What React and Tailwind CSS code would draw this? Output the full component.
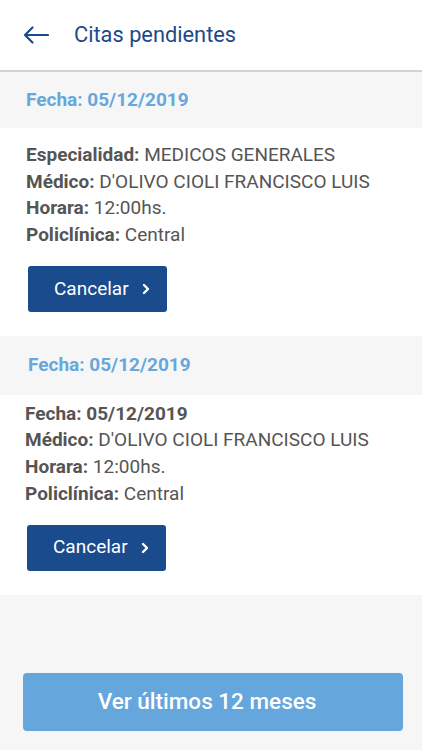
import React from "react";

function Chevron() {
  return (
    <svg width="10" height="12" viewBox="0 0 10 12" className="ml-[12px]">
      <path d="M3 2 L7 6 L3 10" fill="none" stroke="white" strokeWidth="2.4" strokeLinecap="round" strokeLinejoin="round" />
    </svg>
  );
}

function Row({ label, value }) {
  return (
    <div className="h-[26.7px] leading-[26.7px]">
      <span className="font-bold">{label}</span> {value}
    </div>
  );
}

function CancelButton() {
  return (
    <button className="flex items-center justify-start pl-[26px] w-[139px] h-[46px] rounded-[3px] bg-[#1a4b8d] text-white text-[19px]">
      Cancelar
      <Chevron />
    </button>
  );
}

export default function App() {
  return (
    <div className="w-[422px] h-[750px] bg-[#f6f6f6] flex flex-col text-[#555555]" style={{ fontFamily: "Roboto, 'Liberation Sans', sans-serif" }}>
      <div className="h-[72px] bg-white flex items-center border-b-2 border-[#d3d3d3] shrink-0">
        <svg width="26" height="18" viewBox="0 0 26 18" className="ml-[23px]">
          <path d="M25 9 H2 M9.5 1.5 L2 9 L9.5 16.5" fill="none" stroke="#1d4a8a" strokeWidth="2.2" strokeLinecap="round" strokeLinejoin="round" />
        </svg>
        <div className="ml-[25px] text-[21.8px] text-[#1d4a8a]">Citas pendientes</div>
      </div>

      <div className="h-[56px] flex items-center pl-[26px] text-[19px] font-bold text-[#66a8dc] shrink-0">Fecha: 05/12/2019</div>
      <div className="bg-white pl-[26px] pt-[14px] pb-[24px] text-[19px] shrink-0">
        <Row label="Especialidad:" value="MEDICOS GENERALES" />
        <Row label="Médico:" value="D'OLIVO CIOLI FRANCISCO LUIS" />
        <Row label="Horara:" value="12:00hs." />
        <Row label="Policlínica:" value="Central" />
        <div className="mt-[17px] ml-[2px]">
          <CancelButton />
        </div>
      </div>

      <div className="h-[59px] flex items-center pl-[28px] text-[19px] font-bold text-[#66a8dc] shrink-0">Fecha: 05/12/2019</div>
      <div className="bg-white pl-[25px] pt-[6px] pb-[24px] text-[19px] shrink-0">
        <Row label="Fecha:" value={<span className="font-bold">05/12/2019</span>} />
        <Row label="Médico:" value="D'OLIVO CIOLI FRANCISCO LUIS" />
        <Row label="Horara:" value="12:00hs." />
        <Row label="Policlínica:" value="Central" />
        <div className="mt-[17px] ml-[2px]">
          <CancelButton />
        </div>
      </div>

      <div className="flex-1 flex flex-col justify-end pl-[23px] pr-[19px] pb-[19px]">
        <button className="w-full h-[58px] pr-[12px] rounded-[4px] bg-[#65a6dc] text-white text-[22.5px] font-medium">Ver últimos 12 meses</button>
      </div>
    </div>
  );
}
